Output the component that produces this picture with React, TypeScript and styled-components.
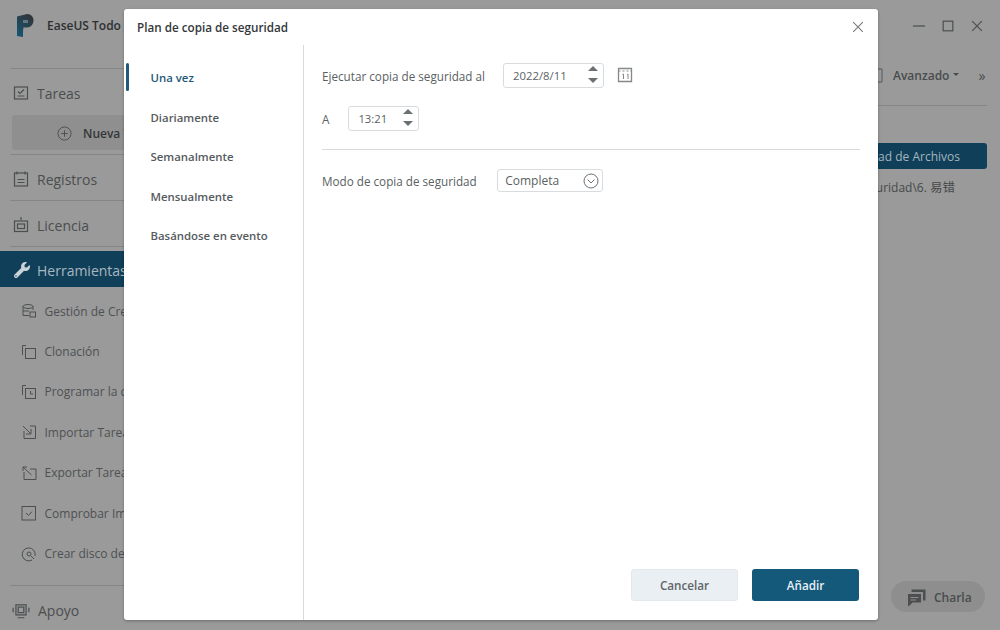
import React from "react";
import styled, { createGlobalStyle } from "styled-components";
import { FaWrench } from "react-icons/fa";

const Global = createGlobalStyle`
  html, body { margin: 0; padding: 0; background: #999; }
  * { box-sizing: border-box; }
`;

const Page = styled.div`
  position: relative;
  width: 1000px;
  height: 630px;
  overflow: hidden;
  display: flex;
  background: #9a9a9a;
  font-family: "Open Sans", "Noto Sans CJK SC", sans-serif;
  color: #3f4344;
`;

const Sidebar = styled.aside`
  width: 300px;
  flex: none;
  display: flex;
  flex-direction: column;
  color: #4a4e4f;
`;

const Brand = styled.div`
  height: 69px;
  margin-left: 10px;
  padding: 13px 0 0 6px;
  display: flex;
  align-items: flex-start;
  gap: 13px;
  border-bottom: 1px solid #858585;
  font-size: 12px;
  font-weight: 600;
  color: #2d3031;
`;

const BrandName = styled.span`
  line-height: 24px;
  margin-top: 1px;
`;

const Svg = styled.svg`
  flex: none;
`;

const MainRow = styled.div<{ $h: number; $pt: number; $line?: boolean }>`
  height: ${(p) => p.$h}px;
  margin-left: 10px;
  display: flex;
  align-items: center;
  gap: 8px;
  padding: ${(p) => p.$pt}px 0 0 3px;
  font-size: 14px;
  border-bottom: ${(p) => (p.$line ? "1px solid #858585" : "none")};
`;

const NewTask = styled.div`
  height: 35px;
  margin-left: 12px;
  padding: 1px 0 0 45px;
  display: flex;
  align-items: center;
  gap: 11px;
  background: #8f8f8f;
  border-radius: 3px;
  font-size: 12px;
  font-weight: 600;
  color: #343738;
`;

const NewTaskGap = styled.div`
  height: 5px;
  margin-left: 10px;
  border-bottom: 1px solid #858585;
`;

const ActiveRow = styled.div`
  height: 36px;
  margin-top: 4px;
  padding: 2px 0 0 14px;
  display: flex;
  align-items: center;
  gap: 7px;
  background: #103f59;
  color: #a9b8c0;
  font-size: 14px;
`;

const ToolList = styled.div`
  display: flex;
  flex-direction: column;
  padding-top: 4px;
  height: 298px;
`;

const ToolRow = styled.div`
  height: 40.4px;
  padding-left: 21px;
  display: flex;
  align-items: center;
  gap: 7.5px;
  font-size: 12px;
  color: #4d5152;
  white-space: nowrap;
`;

const SupportRow = styled.div`
  margin-left: 10px;
  height: 44px;
  border-top: 1px solid #858585;
  display: flex;
  align-items: center;
  gap: 8px;
  padding: 6px 0 0 2px;
  font-size: 14px;
`;

const Main = styled.main`
  flex: 1;
  display: flex;
  flex-direction: column;
  align-items: flex-end;
  padding-right: 13px;
  color: #45494a;
`;

const WindowControls = styled.div`
  height: 52px;
  width: 100%;
  display: flex;
  justify-content: flex-end;
  align-items: center;
  gap: 15px;
  padding-right: 3.5px;
`;

const Toolbar = styled.div`
  height: 54px;
  width: 122px;
  border-bottom: 1px solid #858585;
  display: flex;
  align-items: center;
  padding: 0 0 7px 3px;
  font-size: 12px;
  font-weight: 600;
  color: #484c4d;
  white-space: nowrap;
`;

const ToolbarIcon = styled(Svg)`
  margin-right: 10px;
`;

const Caret = styled.i`
  display: inline-block;
  width: 0;
  height: 0;
  margin: 0 0 1px 4px;
  border: 3px solid transparent;
  border-top: 3.5px solid #484c4d;
  border-bottom: none;
`;

const More = styled.span`
  margin-left: 19px;
  font-weight: 400;
  font-size: 14px;
`;

const PrimaryBar = styled.div`
  margin-top: 37px;
  width: 200px;
  height: 26px;
  padding: 1px 27px 0 0;
  background: #103f59;
  border-radius: 3px;
  display: flex;
  align-items: center;
  justify-content: flex-end;
  color: #a5b5bd;
  font-size: 12px;
  white-space: nowrap;
`;

const PathText = styled.div`
  margin-top: 9px;
  padding-right: 32px;
  font-size: 12px;
  line-height: 20px;
  white-space: nowrap;
`;

const Cjk = styled.span`
  font-size: 12.5px;
`;

const ChatPill = styled.div`
  margin-top: auto;
  margin-bottom: 18px;
  margin-right: 2px;
  width: 94px;
  height: 31px;
  border-radius: 16px;
  background: #8e8e8e;
  display: flex;
  align-items: center;
  gap: 8px;
  padding: 1px 0 0 16px;
  font-size: 12px;
  font-weight: 600;
  color: #484c4d;
`;

const Modal = styled.section`
  position: absolute;
  left: 124px;
  top: 9px;
  width: 754px;
  height: 611px;
  background: #fff;
  border-radius: 3px;
  display: flex;
  flex-direction: column;
  box-shadow: 0 1px 3px rgba(0, 0, 0, 0.3);
`;

const ModalHeader = styled.header`
  height: 36px;
  flex: none;
  display: flex;
  align-items: center;
  justify-content: space-between;
  padding: 0 13px 0 13px;
  font-size: 11.7px;
  font-weight: 600;
  color: #33373a;
`;

const ModalBody = styled.div`
  flex: 1;
  display: flex;
  min-height: 0;
`;

const Nav = styled.nav`
  width: 180px;
  flex: none;
  border-right: 1px solid #d8dbdd;
  padding-top: 13px;
  display: flex;
  flex-direction: column;
`;

const NavItem = styled.div<{ $active?: boolean }>`
  position: relative;
  height: 39.5px;
  padding-left: 26.5px;
  display: flex;
  align-items: center;
  font-size: 11.4px;
  font-weight: 600;
  color: ${(p) => (p.$active ? "#1f5a78" : "#565b5e")};
  &::before {
    content: "";
    display: ${(p) => (p.$active ? "block" : "none")};
    position: absolute;
    left: 2px;
    top: 5px;
    width: 3px;
    height: 28px;
    border-radius: 2px;
    background: #1f5a78;
  }
`;

const Content = styled.div`
  flex: 1;
  display: flex;
  flex-direction: column;
  padding: 18px 18px 19px 18px;
`;

const FieldRow = styled.div<{ $gap: number; $mb?: number }>`
  display: flex;
  align-items: center;
  gap: ${(p) => p.$gap}px;
  margin-bottom: ${(p) => p.$mb ?? 0}px;
`;

const Label = styled.label`
  font-size: 11.7px;
  color: #5a5f62;
  white-space: nowrap;
`;

const Spinner = styled.div<{ $w: number }>`
  width: ${(p) => p.$w}px;
  height: 25px;
  border: 1px solid #d9dcde;
  border-radius: 3px;
  display: flex;
  align-items: center;
  justify-content: space-between;
  padding: 0 5px 0 9px;
  font-size: 11.3px;
  color: #5a5f62;
`;

const Arrows = styled.div`
  display: flex;
  flex-direction: column;
  gap: 7px;
  margin-top: -2px;
`;

const Arrow = styled.i<{ $down?: boolean }>`
  display: block;
  width: 0;
  height: 0;
  border-left: 5.5px solid transparent;
  border-right: 5.5px solid transparent;
  border-${(p) => (p.$down ? "top" : "bottom")}: 5px solid #6b7073;
`;

const CalendarIcon = styled(Svg)`
  margin-left: -5px;
  margin-top: -1px;
`;

const Divider = styled.hr`
  width: 100%;
  margin: 0 0 19px;
  border: none;
  border-top: 1px solid #d8dbdd;
`;

const Select = styled.div`
  width: 106px;
  height: 23px;
  border: 1px solid #d9dcde;
  border-radius: 3px;
  display: flex;
  align-items: center;
  justify-content: space-between;
  padding: 0 3px 0 7px;
  font-size: 12px;
  color: #5a5f62;
`;

const Actions = styled.div`
  margin-top: auto;
  display: flex;
  justify-content: flex-end;
  gap: 14px;
  padding-right: 1px;
`;

const Button = styled.button<{ $primary?: boolean }>`
  width: 107px;
  height: 32px;
  border-radius: 3px;
  border: ${(p) => (p.$primary ? "none" : "1px solid #e3e8ec")};
  background: ${(p) => (p.$primary ? "#14587a" : "#eaeff3")};
  color: ${(p) => (p.$primary ? "#e8f0f4" : "#5f6568")};
  font-family: inherit;
  font-size: 11.7px;
  font-weight: 600;
`;

const Ico = ({
  children,
  size = 16,
  stroke = "#4b4f50",
  sw = 1,
}: {
  children: React.ReactNode;
  size?: number;
  stroke?: string;
  sw?: number;
}) => (
  <Svg width={size} height={size} viewBox="0 0 16 16" fill="none" stroke={stroke} strokeWidth={sw}>
    {children}
  </Svg>
);

const tools: [string, React.ReactNode][] = [
  ["Gestión de Credenciales", <><ellipse cx="7" cy="3.5" rx="5" ry="2" /><path d="M2 3.5v9h6M12 3.5V7M2 8h6" /><rect x="9" y="9" width="5.5" height="5" /></>],
  ["Clonación", <><path d="M5 1.5H1.5V11" /><rect x="4.5" y="4.5" width="10" height="10" /></>],
  ["Programar la copia", <><path d="M5 1.5H1.5V11" /><rect x="4.5" y="4.5" width="10" height="10" /><path d="M9.5 7v3H12" /></>],
  ["Importar Tareas", <><path d="M3 7v7.5h11.5V2H9" /><path d="M2 2l8 8M10 5v5H5" /></>],
  ["Exportar Tareas", <><path d="M3 7v7.5h12V4H9" /><path d="M10.5 10L2 2M2 6V2h4" /></>],
  ["Comprobar Imagen", <><rect x="1" y="1.5" width="13.5" height="13.5" /><path d="M5 8l2.5 2.5L11 6.5" /></>],
  ["Crear disco de arranque", <><path d="M11 14a6.5 6.5 0 1 1 3-4" /><circle cx="8" cy="8" r="2" /><path d="M10 10l3 3" /></>],
];

export default function App() {
  return (
    <Page>
      <Global />
      <Sidebar>
        <Brand>
          <Svg width="18" height="24" viewBox="0 0 18 24">
            <defs>
              <linearGradient id="lg" x1="0" y1="1" x2="0.6" y2="0">
                <stop offset="0" stopColor="#14587a" />
                <stop offset="1" stopColor="#30363a" />
              </linearGradient>
            </defs>
            <path d="M1 3.500L11 1c4.500 0 6.500 3 6.500 6.500S15 14.500 11 14.500H7.500c-.5 2-.5 5-.5 9.500l-6-1z" fill="url(#lg)" />
            <path d="M7 7h5v3H7z" fill="#5f7884" />
          </Svg>
          <BrandName>EaseUS Todo</BrandName>
        </Brand>
        <MainRow $h={46} $pt={2}>
          <Ico sw={1.2}><rect x="1.500" y="2" width="13" height="12" /><path d="M5 6.500l2 2 4-4M4.500 11h7" /></Ico>
          Tareas
        </MainRow>
        <NewTask>
          <Ico size={15}><circle cx="8" cy="8" r="7" /><path d="M8 4.500v7M4.500 8h7" /></Ico>
          Nueva Tarea
        </NewTask>
        <NewTaskGap />
        <MainRow $h={46} $pt={3} $line>
          <Ico sw={1.2}><path d="M4 .5v3M12 .5v3" /><rect x="1.500" y="2" width="13" height="13" /><path d="M4.500 8.500h7M4.500 11.500h7" /></Ico>
          Registros
        </MainRow>
        <MainRow $h={46} $pt={3} $line>
          <Ico sw={1.2}><path d="M8 0v3" /><rect x="1.500" y="4" width="13" height="10.500" /><rect x="4.500" y="7" width="7" height="4.500" /></Ico>
          Licencia
        </MainRow>
        <ActiveRow>
          <FaWrench size={16} color="#c9d3d8" />
          Herramientas
        </ActiveRow>
        <ToolList>
          {tools.map(([label, icon]) => (
            <ToolRow key={label}>
              <Ico>{icon}</Ico>
              {label}
            </ToolRow>
          ))}
        </ToolList>
        <SupportRow>
          <Ico size={18} sw={1.1}><rect x="3.500" y="2.500" width="9" height="9" /><rect x="5.500" y="4.500" width="5" height="5" /><path d="M1 5v4M15 5v4M5 14h6" /></Ico>
          Apoyo
        </SupportRow>
      </Sidebar>
      <Main>
        <WindowControls>
          <Ico size={14}><path d="M1 8h14" strokeWidth="1.400" /></Ico>
          <Ico size={14}><rect x="2.500" y="2.500" width="11" height="11" strokeWidth="1.400" /></Ico>
          <Ico size={14}><path d="M2.500 2.500l11 11M13.500 2.500l-11 11" strokeWidth="1.400" /></Ico>
        </WindowControls>
        <Toolbar>
          <ToolbarIcon width="15" height="15" viewBox="0 0 15 15" fill="none" stroke="#55595a">
            <path d="M1 1h13v13H1zM5 1v13" />
          </ToolbarIcon>
          Avanzado
          <Caret />
          <More>»</More>
        </Toolbar>
        <PrimaryBar>Copia de Seguridad de Archivos</PrimaryBar>
        <PathText>D:\Copia de Seguridad\6. <Cjk>易错</Cjk></PathText>
        <ChatPill>
          <Svg width="19" height="19" viewBox="0 0 19 19" fill="#4b4f50">
            <path d="M1 6h13v8.500H5.500L2 18H1zM3.500 9v1h8V9zM3.500 11.500v1h5.500v-1z" fillRule="evenodd" />
            <path d="M4.500 1.500h14v11h-2.500V4H4.500z" />
          </Svg>
          Charla
        </ChatPill>
      </Main>
      <Modal>
        <ModalHeader>
          Plan de copia de seguridad
          <Ico size={14} stroke="#777" sw={1.2}><path d="M2.500 2.500l11 11M13.500 2.500l-11 11" /></Ico>
        </ModalHeader>
        <ModalBody>
          <Nav>
            <NavItem $active>Una vez</NavItem>
            <NavItem>Diariamente</NavItem>
            <NavItem>Semanalmente</NavItem>
            <NavItem>Mensualmente</NavItem>
            <NavItem>Basándose en evento</NavItem>
          </Nav>
          <Content>
            <FieldRow $gap={18.2} $mb={18}>
              <Label>Ejecutar copia de seguridad al</Label>
              <Spinner $w={101}>
                2022/8/11
                <Arrows><Arrow /><Arrow $down /></Arrows>
              </Spinner>
              <CalendarIcon width="16" height="16" viewBox="0 0 16 16" fill="none" stroke="#85898b" strokeWidth="1.3">
                <path d="M1.500 1.500h13v13h-13z" />
                <path d="M1.500 4h13" strokeWidth="1" strokeDasharray="2 2" />
                <path d="M5.500 7.500l1-.5v5M10 7.500l1-.5v5" strokeWidth="1" />
              </CalendarIcon>
            </FieldRow>
            <FieldRow $gap={19} $mb={18}>
              <Label>A</Label>
              <Spinner $w={71}>
                13:21
                <Arrows><Arrow /><Arrow $down /></Arrows>
              </Spinner>
            </FieldRow>
            <Divider />
            <FieldRow $gap={20.5}>
              <Label>Modo de copia de seguridad</Label>
              <Select>
                Completa
                <Ico size={16} stroke="#6b7073"><circle cx="8" cy="8" r="7" /><path d="M4.500 6.500L8 10l3.500-3.500" /></Ico>
              </Select>
            </FieldRow>
            <Actions>
              <Button>Cancelar</Button>
              <Button $primary>Añadir</Button>
            </Actions>
          </Content>
        </ModalBody>
      </Modal>
    </Page>
  );
}
